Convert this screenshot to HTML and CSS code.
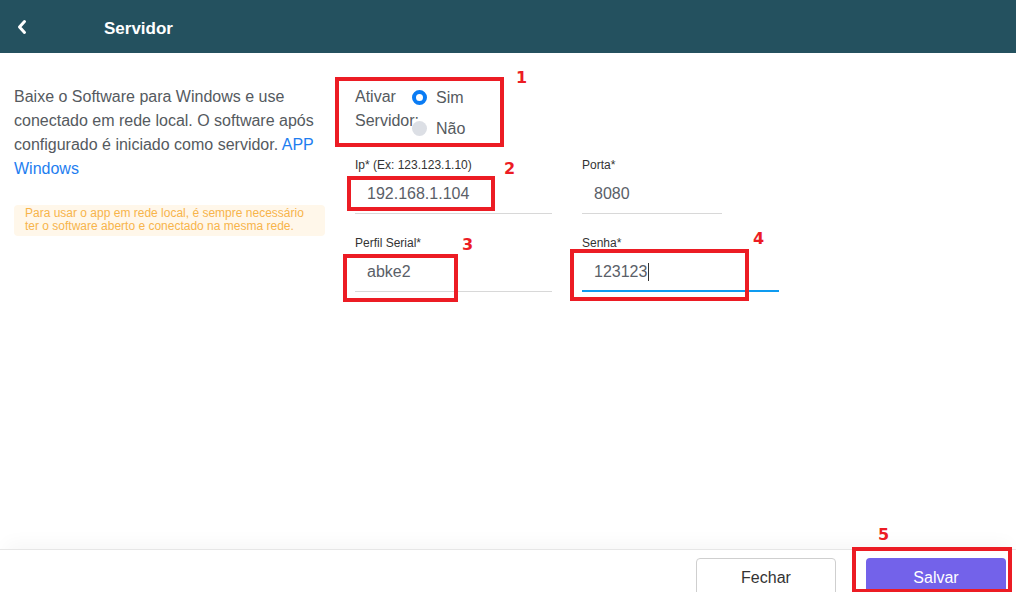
FILE: index.html
```html
<!DOCTYPE html>
<html lang="pt">
<head>
<meta charset="utf-8">
<title>Servidor</title>
<link rel="stylesheet" href="styles.css">
</head>
<body>
<div class="app">
  <header class="topbar">
    <span class="back">
      <svg width="12" height="16" viewBox="0 0 12 16"><path d="M8.5 2.5 L3.5 8 L8.5 13.5" fill="none" stroke="#fff" stroke-width="3" stroke-linecap="round" stroke-linejoin="round"/></svg>
    </span>
    <h1 class="title">Servidor</h1>
  </header>

  <main class="content">
    <section class="info">
      <p class="desc">Baixe o Software para Windows e use conectado em rede local. O software após configurado é iniciado como servidor. <a class="link" href="#">APP Windows</a></p>
      <div class="note">Para usar o app em rede local, é sempre necessário ter o software aberto e conectado na mesma rede.</div>
    </section>

    <section class="form">
      <div class="radio-group">
        <span class="radio-label">Ativar Servidor:</span>
        <div class="radio-options">
          <label class="option"><span class="dot on"></span>Sim</label>
          <label class="option"><span class="dot"></span>Não</label>
        </div>
      </div>

      <div class="grid">
        <div class="field w197">
          <span class="flabel">Ip* (Ex: 123.123.1.10)</span>
          <span class="value">192.168.1.104</span>
        </div>
        <div class="field w140">
          <span class="flabel">Porta*</span>
          <span class="value">8080</span>
        </div>
        <div class="field w197">
          <span class="flabel">Perfil Serial*</span>
          <span class="value">abke2</span>
        </div>
        <div class="field w197 focus">
          <span class="flabel">Senha*</span>
          <span class="value">123123<span class="caret"></span></span>
        </div>
      </div>
    </section>
  </main>

  <footer class="footer">
    <button class="btn btn-light">Fechar</button>
    <button class="btn btn-primary">Salvar</button>
  </footer>

  <div class="mark m1"></div><span class="num n1">1</span>
  <div class="mark m2"></div><span class="num n2">2</span>
  <div class="mark m3"></div><span class="num n3">3</span>
  <div class="mark m4"></div><span class="num n4">4</span>
  <div class="mark m5"></div><span class="num n5">5</span>
</div>
</body>
</html>
```
FILE: styles.css
```css
* { box-sizing: border-box; }
html, body { margin: 0; padding: 0; }
body {
  font-family: "Liberation Sans", Arial, sans-serif;
  background: #fff;
  color: #555;
}
.app {
  position: relative;
  width: 1016px;
  height: 592px;
  display: flex;
  flex-direction: column;
  overflow: hidden;
}
.topbar {
  height: 53px;
  flex: none;
  background: #24515f;
  display: flex;
  align-items: center;
  padding-left: 16px;
}
.back { display: flex; width: 14px; height: 16px; margin-top: 1px; }
.title {
  margin: 4px 0 0 74px;
  font-size: 17px;
  font-weight: bold;
  color: #fff;
  line-height: 20px;
}
.content {
  flex: 1;
  display: flex;
}
.info {
  width: 355px;
  flex: none;
  padding: 32px 30px 0 14px;
}
.desc {
  margin: 0;
  font-size: 16px;
  line-height: 24px;
  color: #555a60;
}
.link { color: #1e7ef0; text-decoration: none; }
.note {
  margin-top: 24px;
  width: 311px;
  background: #fff7ea;
  border-radius: 4px;
  padding: 2px 8px 3px 11px;
  font-size: 12px;
  line-height: 13px;
  color: #f7b44a;
}
.form {
  padding-top: 29px;
}
.radio-group {
  display: flex;
  align-items: flex-start;
}
.radio-label {
  width: 57px;
  font-size: 16px;
  line-height: 24px;
  color: #555a60;
  margin-top: 3px;
}
.radio-options { display: flex; flex-direction: column; }
.option {
  display: flex;
  align-items: center;
  height: 31px;
  font-size: 16px;
  color: #555a60;
}
.dot {
  width: 15px;
  height: 15px;
  border-radius: 50%;
  background: #dcdfe5;
  margin-right: 9px;
}
.dot.on {
  background: #fff;
  border: 4.5px solid #0a7cf4;
}
.grid {
  margin-top: 14px;
  display: grid;
  grid-template-columns: 227px auto;
  row-gap: 22px;
  align-items: start;
}
.field { display: flex; flex-direction: column; }
.w197 { width: 197px; }
.w140 { width: 140px; }
.flabel {
  font-size: 12px;
  line-height: 14px;
  color: #333;
}
.value {
  height: 42px;
  display: flex;
  align-items: center;
  padding: 3px 0 0 12px;
  font-size: 16px;
  color: #5a6068;
  border-bottom: 1px solid #d8d8d8;
}
.field.focus .value {
  border-bottom: 2px solid #0e9bf0;
}
.caret {
  display: inline-block;
  width: 1px;
  height: 18px;
  background: #333;
  margin-left: 1px;
}
.footer {
  height: 43px;
  flex: none;
  border-top: 1px solid #e6e6e6;
  box-shadow: 0 -12px 18px -6px rgba(0, 0, 0, 0.035);
  display: flex;
  justify-content: flex-end;
  align-items: flex-start;
  padding: 8px 10px 0 0;
  gap: 30px;
  position: relative;
}
.btn {
  height: 40px;
  width: 140px;
  border-radius: 4px;
  font-family: "Liberation Sans", Arial, sans-serif;
  font-size: 16px;
  padding: 0 0 1px;
}
.btn-light {
  background: #fff;
  color: #333;
  border: 1px solid #cfcfcf;
}
.btn-primary {
  background: #7362ea;
  color: #fff;
  border: none;
}
.mark {
  position: absolute;
  border: 4px solid #ec1c24;
}
.m1 { left: 335px; top: 77px; width: 169px; height: 70px; }
.m2 { left: 347px; top: 176px; width: 148px; height: 35px; }
.m3 { left: 343px; top: 254px; width: 115px; height: 48px; }
.m4 { left: 570px; top: 249px; width: 179px; height: 52px; }
.m5 { left: 852px; top: 547px; width: 160px; height: 46px; }
.num {
  position: absolute;
  font-family: "DejaVu Sans", sans-serif;
  font-weight: bold;
  font-size: 16px;
  line-height: 18px;
  color: #ec1c24;
}
.n1 { left: 516px; top: 69px; }
.n2 { left: 504px; top: 160px; }
.n3 { left: 462px; top: 236px; }
.n4 { left: 753px; top: 230px; }
.n5 { left: 878px; top: 526px; }
```
